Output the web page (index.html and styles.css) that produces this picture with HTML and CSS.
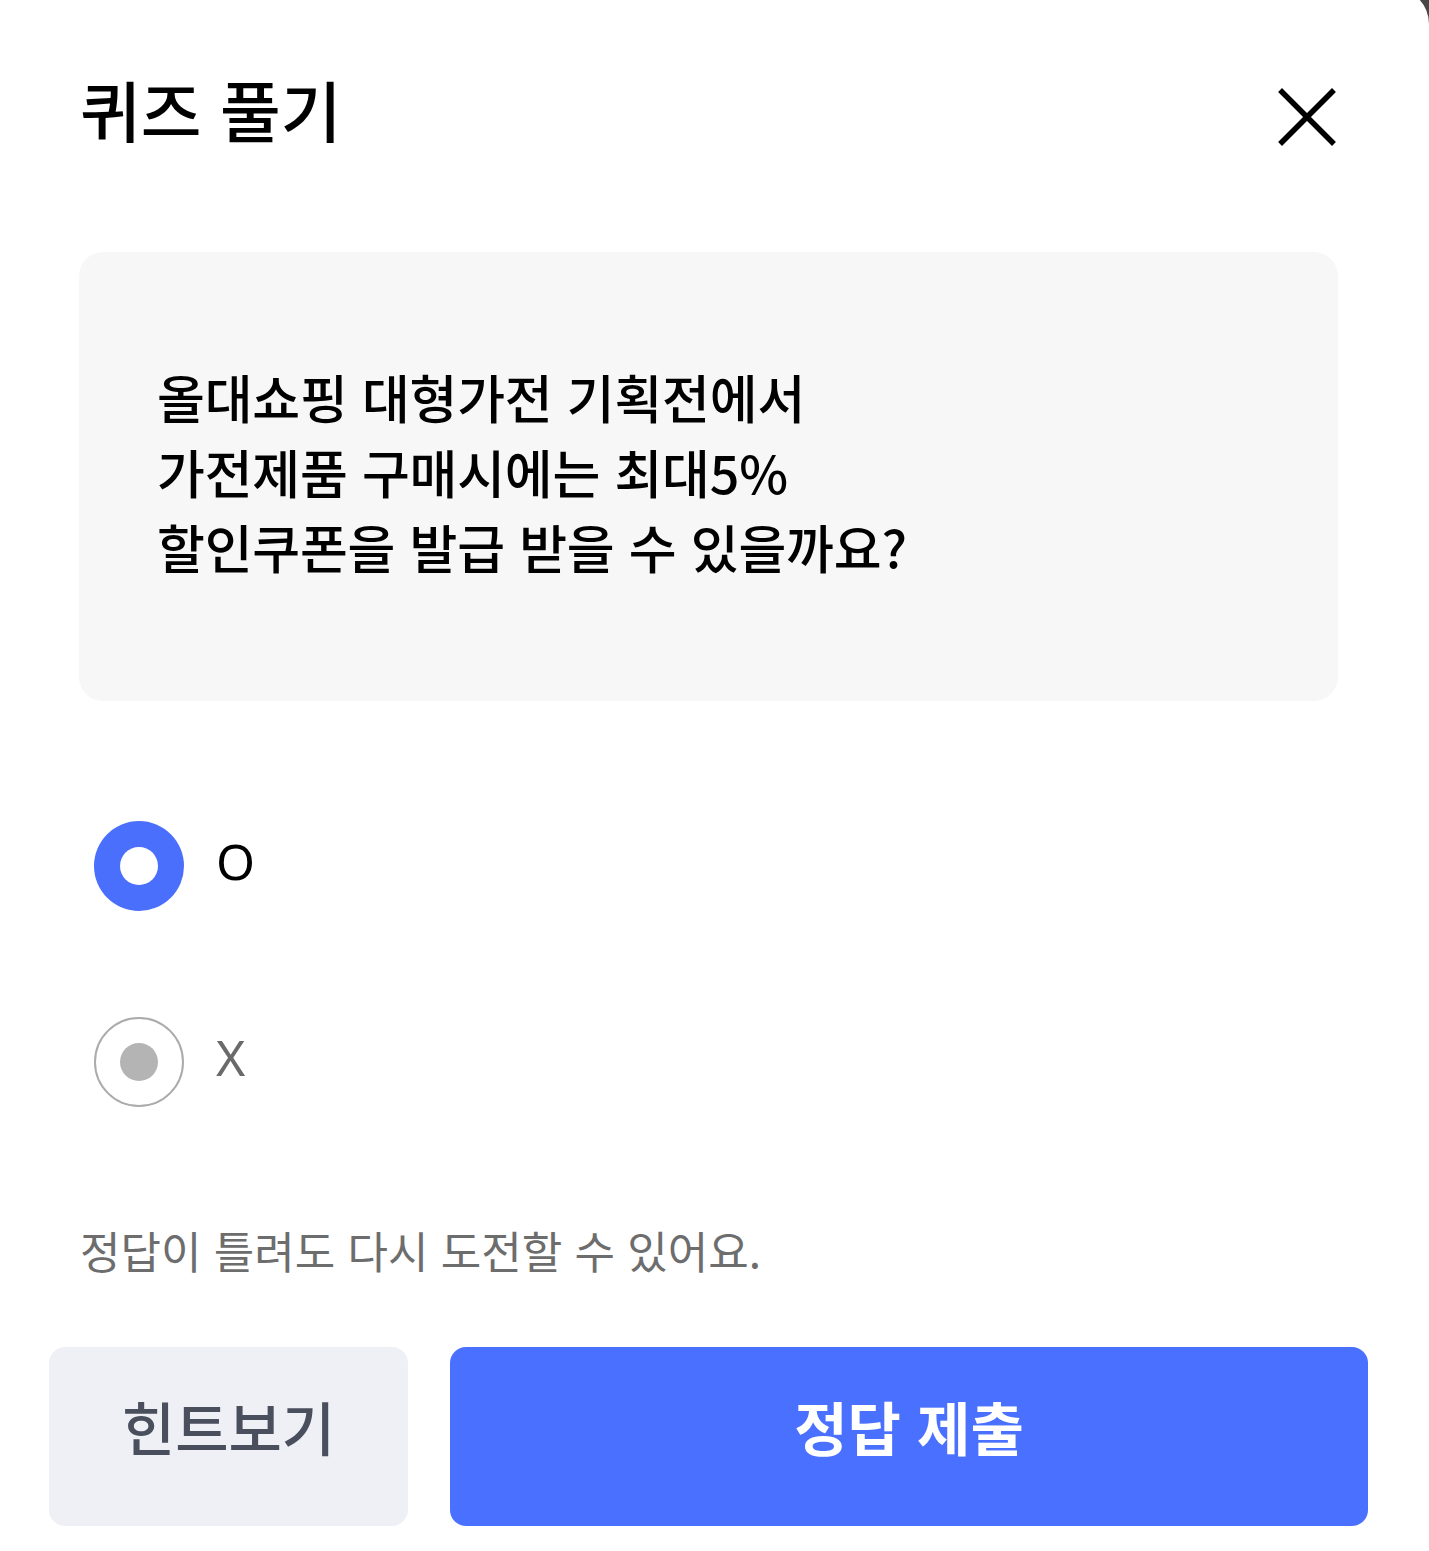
FILE: index.html
```html
<!DOCTYPE html>
<html lang="ko">
<head>
<meta charset="utf-8">
<title>퀴즈 풀기</title>
<link rel="stylesheet" href="styles.css">
</head>
<body>
<div class="sheet">
  <header class="header">
    <h1 class="title">퀴즈 풀기</h1>
    <button class="close" aria-label="닫기">
      <svg width="60" height="60" viewBox="0 0 60 60"><path d="M5 5 L55 55 M55 5 L5 55" stroke="#000" stroke-width="5.5" stroke-linecap="square" fill="none"/></svg>
    </button>
  </header>
  <section class="card">
    <p class="question">올대쇼핑 대형가전 기획전에서<br>가전제품 구매시에는 최대5%<br>할인쿠폰을 발급 받을 수 있을까요?</p>
  </section>
  <div class="options">
    <label class="option">
      <span class="radio radio-on"></span>
      <span class="opt-label">O</span>
    </label>
    <label class="option">
      <span class="radio radio-off"></span>
      <span class="opt-label opt-off">X</span>
    </label>
  </div>
  <p class="notice">정답이 틀려도 다시 도전할 수 있어요.</p>
  <div class="actions">
    <button class="btn btn-hint">힌트보기</button>
    <button class="btn btn-submit">정답 제출</button>
  </div>
</div>
</body>
</html>
```
FILE: styles.css
```css
html, body {
  margin: 0;
  padding: 0;
}
body {
  background: #474747;
  font-family: "Noto Sans CJK KR", "Noto Sans", sans-serif;
  height: 1551px;
  overflow: hidden;
}
.sheet {
  background: #fff;
  margin-top: -12px;
  padding-top: 12px;
  border-top-right-radius: 36px;
  height: 1600px;
  box-sizing: border-box;
}
.header {
  display: flex;
  justify-content: space-between;
  align-items: flex-start;
  padding: 63px 92px 0 80px;
  height: 95px;
}
.title {
  margin: 0;
  font-size: 66px;
  font-weight: 500;
  line-height: 90px;
  color: #000;
}
.close {
  border: 0;
  background: none;
  padding: 0;
  margin-top: 24px;
  width: 60px;
  height: 60px;
  display: flex;
}
.card {
  margin: 94px 91px 0 79px;
  height: 449px;
  background: #f7f7f7;
  border-radius: 24px;
  display: flex;
  align-items: center;
  padding-left: 78px;
  padding-bottom: 10px;
  box-sizing: border-box;
}
.question {
  margin: 0;
  font-size: 52px;
  font-weight: 500;
  line-height: 75px;
  color: #000;
  letter-spacing: -0.2px;
}
.options {
  margin-top: 120px;
  padding-left: 94px;
  display: flex;
  flex-direction: column;
  gap: 106px;
}
.option {
  display: flex;
  align-items: center;
  gap: 32px;
  height: 90px;
}
.radio {
  width: 90px;
  height: 90px;
  border-radius: 50%;
  box-sizing: border-box;
  display: flex;
  align-items: center;
  justify-content: center;
}
.radio::after {
  content: "";
  width: 38px;
  height: 38px;
  border-radius: 50%;
}
.radio-on {
  background: #4a6ffc;
}
.radio-on::after {
  background: #fff;
}
.radio-off {
  border: 2.5px solid #ababab;
  background: #fff;
}
.radio-off::after {
  background: #b4b4b4;
}
.opt-label {
  font-family: "Noto Sans", sans-serif;
  font-size: 50px;
  color: #000;
  line-height: 1;
  padding-bottom: 10px;
}
.opt-off {
  color: #6a6a6a;
}
.notice {
  margin: 113px 0 0 80px;
  font-size: 44px;
  line-height: 60px;
  color: #6d6d6d;
}
.actions {
  display: flex;
  gap: 42px;
  margin: 67px 61px 0 49px;
}
.btn {
  border: 0;
  height: 179px;
  border-radius: 16px;
  font-family: "Noto Sans CJK KR", "Noto Sans", sans-serif;
  font-size: 58px;
  padding: 0 0 22px;
  cursor: pointer;
}
.btn-hint {
  width: 359px;
  background: #eff0f5;
  color: #4a4f5e;
  font-weight: 500;
}
.btn-submit {
  flex: 1;
  background: #4a70ff;
  color: #fff;
  font-weight: 700;
}
```
